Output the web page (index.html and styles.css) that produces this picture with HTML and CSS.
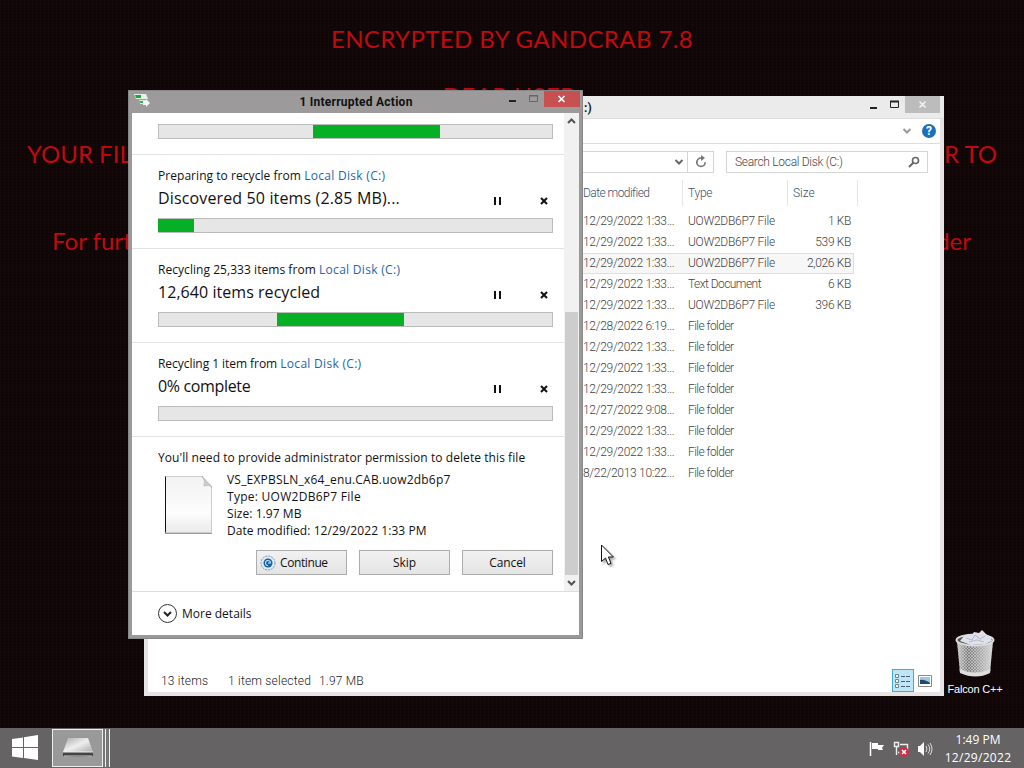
FILE: index.html
```html
<!DOCTYPE html>
<html lang="en">
<head>
    <meta charset="UTF-8">
    <meta name="viewport" content="width=device-width, initial-scale=1.0">
    <title>Desktop</title>
    <link rel="stylesheet" href="styles.css">
</head>
<body>
<div class="desktop">

    <!-- Wallpaper text -->
    <div class="wallpaper">
        <div class="note note-title">ENCRYPTED BY GANDCRAB 7.8</div>
        <div class="note note-dear">DEAR USER,</div>
        <div class="note note-split note-files"><span>YOUR FILES</span><span>ORDER TO</span></div>
        <div class="note note-split note-steps"><span>For further</span><span>folder</span></div>
    </div>

    <!-- Recycle bin -->
    <div class="desktop-icon">
        <svg width="42" height="50" viewBox="0 0 42 50">
            <defs>
                <linearGradient id="bin" x1="0" x2="1" y1="0" y2="0">
                    <stop offset="0" stop-color="#c8c8c8"/>
                    <stop offset=".3" stop-color="#7a7a7a"/>
                    <stop offset=".65" stop-color="#a5a5a5"/>
                    <stop offset="1" stop-color="#d8d8d8"/>
                </linearGradient>
                <pattern id="mesh" width="3" height="3" patternUnits="userSpaceOnUse">
                    <path d="M0 0l3 3M3 0l-3 3" stroke="#ddd" stroke-width=".5"/>
                </pattern>
            </defs>
            <path d="M3 12l3 31q14 7 30 0l3-31z" fill="url(#bin)"/>
            <path d="M3 12l3 31q14 7 30 0l3-31z" fill="url(#mesh)"/>
            <path d="M5.500 40q15 7 31 0l-.5 4q-14 7-30 0z" fill="#dedede"/>
            <ellipse cx="21" cy="11" rx="18.500" ry="5.500" fill="#555" stroke="#ddd" stroke-width="2"/>
            <path d="M6 12l4-5 8-1 2-3 5 1 3-3 4 4 5 3 1 4-7 3-14 1z" fill="#dfe2ea"/>
            <path d="M12 9l6 2 3-5 5 4 5-3M15 13l8-2 7 2" fill="none" stroke="#b4b9c6"/>
        </svg>
        <span>Falcon C++</span>
    </div>

    <!-- File explorer -->
    <div class="explorer">
        <div class="explorer-title">
            <span class="explorer-name">:)</span>
            <svg class="explorer-controls" width="74" height="18" viewBox="0 0 74 18">
                <path d="M4 12h7" stroke="#222" stroke-width="2"/>
                <path d="M24.500 5.500h8v6h-8z" fill="none" stroke="#222"/>
                <path d="M24 5.500h9" stroke="#222" stroke-width="2"/>
                <rect x="39" y="0" width="35" height="17" fill="#bcbcbc"/>
                <path d="M53.500 5.500l6 6M59.500 5.500l-6 6" stroke="#f2f2f2" stroke-width="1.700"/>
            </svg>
        </div>
        <div class="ribbon">
            <svg width="10" height="8" viewBox="0 0 10 8"><path d="M1.500 2l3.500 3.500L8.500 2" fill="none" stroke="#999" stroke-width="2"/></svg>
            <span class="help">?</span>
        </div>
        <div class="address-row">
            <div class="address">
                <svg width="10" height="8" viewBox="0 0 10 8"><path d="M1.500 2l3.500 3.500L8.500 2" fill="none" stroke="#666" stroke-width="2"/></svg>
            </div>
            <div class="refresh">
                <svg width="14" height="14" viewBox="0 0 14 14"><path d="M8.500 3H7a4.200 4.200 0 1 0 4.200 4.200" fill="none" stroke="#777" stroke-width="1.700"/><path d="M7 0l4 3-4 3z" fill="#777"/></svg>
            </div>
            <div class="search">
                <span>Search Local Disk (C:)</span>
                <svg width="12" height="12" viewBox="0 0 12 12"><circle cx="7.500" cy="4.500" r="3" fill="none" stroke="#666" stroke-width="1.600"/><path d="M5.300 6.700L1 11" stroke="#666" stroke-width="2"/></svg>
            </div>
        </div>
        <div class="columns">
            <span class="date">Date modified</span><span class="type">Type</span><span class="size">Size</span>
        </div>
        <div class="files">
            <div class="file"><span class="date">12/29/2022 1:33...</span><span class="type">UOW2DB6P7 File</span><span class="size">1 KB</span></div>
            <div class="file"><span class="date">12/29/2022 1:33...</span><span class="type">UOW2DB6P7 File</span><span class="size">539 KB</span></div>
            <div class="file selected"><span class="date">12/29/2022 1:33...</span><span class="type">UOW2DB6P7 File</span><span class="size">2,026 KB</span></div>
            <div class="file"><span class="date">12/29/2022 1:33...</span><span class="type text-type">Text Document</span><span class="size">6 KB</span></div>
            <div class="file"><span class="date">12/29/2022 1:33...</span><span class="type">UOW2DB6P7 File</span><span class="size">396 KB</span></div>
            <div class="file"><span class="date">12/28/2022 6:19...</span><span class="type folder">File folder</span></div>
            <div class="file"><span class="date">12/29/2022 1:33...</span><span class="type folder">File folder</span></div>
            <div class="file"><span class="date">12/29/2022 1:33...</span><span class="type folder">File folder</span></div>
            <div class="file"><span class="date">12/29/2022 1:33...</span><span class="type folder">File folder</span></div>
            <div class="file"><span class="date">12/27/2022 9:08...</span><span class="type folder">File folder</span></div>
            <div class="file"><span class="date">12/29/2022 1:33...</span><span class="type folder">File folder</span></div>
            <div class="file"><span class="date">12/29/2022 1:33...</span><span class="type folder">File folder</span></div>
            <div class="file"><span class="date">8/22/2013 10:22...</span><span class="type folder">File folder</span></div>
        </div>
        <div class="status">
            <span class="count">13 items</span>
            <span class="chosen">1 item selected</span>
            <span class="bytes">1.97 MB</span>
            <div class="views">
                <div class="view active">
                    <svg width="16" height="14" viewBox="0 0 16 14"><path d="M.5.500h3v3h-3zM.5 5.500h3v3h-3zM.5 10.500h3v3h-3z" fill="#fff" stroke="#6a8496"/><path d="M6 2.500h10M6 7.500h10M6 12.500h10" stroke="#46606f" stroke-dasharray="4 1"/></svg>
                </div>
                <div class="view">
                    <svg width="14" height="12" viewBox="0 0 14 12"><path d="M.5.500h13v11H.5z" fill="#fff" stroke="#888"/><path d="M2 2h10v7H2z" fill="#9cc8e2"/><path d="M2 5q4-1 10 3v1H2z" fill="#204a68"/></svg>
                </div>
            </div>
        </div>
    </div>

    <!-- Delete progress dialog -->
    <div class="dialog">
        <div class="dialog-title">
            <svg class="dialog-icon" width="16" height="15" viewBox="0 0 16 15">
                <path d="M0 1h12l2 5H2z" fill="#e8efe9"/><path d="M1 2h6v3H2z" fill="#16a938"/><path d="M5 7h8v4H6z" fill="#dce9df"/><path d="M5 8h4v2H6z" fill="#35b853"/><path d="M9 8h3V6l4 4-4 4v-2H9z" fill="#f4f4f4"/>
            </svg>
            <span class="dialog-name">1 Interrupted Action</span>
            <svg class="dialog-controls" width="74" height="17" viewBox="0 0 74 17">
                <path d="M3 11h7" stroke="#222" stroke-width="2"/>
                <path d="M23.500 5.500h8v6h-8zM23 6h9" fill="none" stroke="#666"/>
                <rect x="38" y="0" width="36" height="17" fill="#c75050"/>
                <path d="M52.500 6l6 6M58.500 6l-6 6" stroke="#fff" stroke-width="1.700"/>
            </svg>
        </div>
        <div class="dialog-scroll">
            <div class="jobs">
                <div class="job first">
                    <div class="bar"><div class="fill" style="margin-left: 154px; width: 127px"></div></div>
                </div>
                <div class="job">
                    <div class="job-from">Preparing to recycle from <a>Local Disk (C:)</a></div>
                    <div class="job-line">
                        <span class="job-state discovered">Discovered 50 items (2.85 MB)...</span>
                        <svg width="55" height="10" viewBox="0 0 55 10"><path d="M1 1v8M6 1v8" stroke="#111" stroke-width="2"/><path d="M47 2l6 6M53 2l-6 6" stroke="#111" stroke-width="2"/></svg>
                    </div>
                    <div class="bar"><div class="fill edge" style="width: 36px"></div></div>
                </div>
                <div class="job">
                    <div class="job-from">Recycling 25,333 items from <a>Local Disk (C:)</a></div>
                    <div class="job-line">
                        <span class="job-state">12,640 items recycled</span>
                        <svg width="55" height="10" viewBox="0 0 55 10"><path d="M1 1v8M6 1v8" stroke="#111" stroke-width="2"/><path d="M47 2l6 6M53 2l-6 6" stroke="#111" stroke-width="2"/></svg>
                    </div>
                    <div class="bar"><div class="fill" style="margin-left: 118px; width: 127px"></div></div>
                </div>
                <div class="job">
                    <div class="job-from single">Recycling 1 item from <a>Local Disk (C:)</a></div>
                    <div class="job-line">
                        <span class="job-state complete">0% complete</span>
                        <svg width="55" height="10" viewBox="0 0 55 10"><path d="M1 1v8M6 1v8" stroke="#111" stroke-width="2"/><path d="M47 2l6 6M53 2l-6 6" stroke="#111" stroke-width="2"/></svg>
                    </div>
                    <div class="bar"></div>
                </div>
                <div class="permission">
                    <div class="permission-text">You'll need to provide administrator permission to delete this file</div>
                    <div class="file-info">
                        <svg width="50" height="60" viewBox="0 0 50 60">
                            <defs><linearGradient id="paper" x1="0" x2="0" y1="0" y2="1"><stop offset="0" stop-color="#f2f2f2"/><stop offset=".65" stop-color="#fdfdfd"/><stop offset="1" stop-color="#eaeaea"/></linearGradient></defs>
                            <path d="M1.500 1.500h36l10 10v46h-46z" fill="url(#paper)" stroke="#ccc"/>
                            <path d="M1.500 1.500v56" stroke="#111"/><path d="M1 58.500h47" stroke="#999"/>
                            <path d="M38 1q4 5 2 10 5-2 8 1z" fill="#ccc" stroke="#aaa" stroke-width=".6"/>
                        </svg>
                        <div class="file-lines">
                            <div class="line-name">VS_EXPBSLN_x64_enu.CAB.uow2db6p7</div>
                            <div class="line-type">Type: UOW2DB6P7 File</div>
                            <div class="line-size">Size: 1.97 MB</div>
                            <div class="line-date">Date modified: 12/29/2022 1:33 PM</div>
                        </div>
                    </div>
                    <div class="buttons">
                        <button class="btn continue">
                            <svg width="16" height="16" viewBox="0 0 16 16"><circle cx="8" cy="8" r="7" fill="#dceaf5" stroke="#8297a8" stroke-dasharray="2 1"/><circle cx="8" cy="8" r="4.500" fill="#17639f"/><path d="M8 10.500a2.500 2.500 0 1 1 2.500-2.500H8" fill="none" stroke="#bfe0f5" stroke-width="1.100"/></svg>
                            Continue
                        </button>
                        <button class="btn">Skip</button>
                        <button class="btn">Cancel</button>
                    </div>
                </div>
            </div>
            <div class="scrollbar">
                <svg width="9" height="8" viewBox="0 0 9 8"><path d="M1 6l3.500-3.500L8 6" fill="none" stroke="#555" stroke-width="2"/></svg>
                <div class="thumb"></div>
                <svg width="9" height="8" viewBox="0 0 9 8"><path d="M1 2l3.500 3.500L8 2" fill="none" stroke="#555" stroke-width="2"/></svg>
            </div>
        </div>
        <div class="more">
            <svg width="20" height="20" viewBox="0 0 20 20"><circle cx="9.500" cy="9.500" r="9" fill="#fff" stroke="#333"/><path d="M6 8l3.500 3.500L13 8" fill="none" stroke="#222" stroke-width="2"/></svg>
            <span>More details</span>
        </div>
    </div>

    <!-- Mouse pointer -->
    <svg class="pointer" width="16" height="24" viewBox="0 0 16 24">
        <path d="M1.500 1v16.500l4-3.500 2.500 6.500 3-1.200-2.600-6.300h5z" fill="#fff" stroke="#111"/>
    </svg>

    <!-- Taskbar -->
    <div class="taskbar">
        <svg class="start" width="27" height="26" viewBox="0 0 27 26"><path d="M0 4l11-1.500V12H0zM12 2.300L26 0v12H12zM0 13h11v10L0 21.500zM12 13h14v12l-14-2z" fill="#fff"/></svg>
        <div class="task">
            <svg width="32" height="20" viewBox="0 0 32 20">
                <defs><linearGradient id="drive" x1="0" x2="1" y1="0" y2="1"><stop offset="0" stop-color="#aaa"/><stop offset=".5" stop-color="#eee"/><stop offset="1" stop-color="#aaa"/></linearGradient></defs>
                <path d="M6 0h20l5 14H1z" fill="url(#drive)"/><path d="M1 14h30v4q-15 2-30 0z" fill="#444"/><path d="M1 14h30" stroke="#eee"/><path d="M2 18h28" stroke="#ccc"/>
            </svg>
        </div>
        <div class="stack"></div>
        <div class="stack"></div>
        <div class="tray">
            <svg width="16" height="16" viewBox="0 0 16 16"><path d="M1.500 1v14" stroke="#fff" stroke-width="1.500"/><path d="M3 2h6v2h6l-2 3 1 2H9V8H3z" fill="#fff"/></svg>
            <svg width="17" height="16" viewBox="0 0 17 16"><path d="M1.500 1.500h4v4h-4zM3.500 6v8M7 3.500h7.500v6M5 11.500h4" fill="none" stroke="#eee" stroke-width="1.400"/><circle cx="11" cy="11" r="4.800" fill="#d52c42"/><path d="M9 9l4 4M13 9l-4 4" stroke="#fff" stroke-width="1.500"/></svg>
            <svg width="16" height="16" viewBox="0 0 16 16"><path d="M0 5h2l4-4v14l-4-4H0z" fill="#fff"/><path d="M8 5q2 3 0 6M10 3.500q3.500 4.500 0 9M12 2q4 6 0 12" fill="none" stroke="#ddd"/></svg>
        </div>
        <div class="clock"><span class="time">1:49 PM</span><span class="day">12/29/2022</span></div>
    </div>
</div>
</body>
</html>
```
FILE: styles.css
```css
/* General Styles */
* {
    box-sizing: border-box;
}

body {
    margin: 0;
    font-family: "Open Sans", sans-serif;
    font-size: 12px;
}

svg {
    display: block;
    flex-shrink: 0;
}

.desktop {
    position: relative;
    width: 1024px;
    height: 768px;
    overflow: hidden;
    background-color: #100708;
    background-image: repeating-linear-gradient(90deg, rgba(75, 20, 20, 0.1) 0 1px, transparent 1px 4px), repeating-linear-gradient(0deg, rgba(0, 0, 0, 0.2) 0 1px, transparent 1px 3px);
}

/* Wallpaper */
.note {
    color: #bf0a10;
    font-family: Lato, sans-serif;
    font-size: 24px;
    line-height: 30px;
    white-space: nowrap;
    text-align: center;
}

.note-title {
    padding-top: 24px;
    letter-spacing: 0.4px;
}

.note-dear {
    padding-top: 27px;
    letter-spacing: 0.4px;
}

.note-split {
    display: flex;
    justify-content: space-between;
}

.note-files {
    padding: 28px 27px 0;
}

.note-steps {
    padding: 57px 53px 0 52px;
}

.desktop-icon {
    position: absolute;
    left: 936px;
    top: 629px;
    width: 78px;
    display: flex;
    flex-direction: column;
    align-items: center;
    color: #fff;
    font-family: "Liberation Sans", sans-serif;
    font-size: 11px;
    line-height: 20px;
    letter-spacing: -0.2px;
}

/* Explorer */
.explorer {
    position: absolute;
    left: 144px;
    top: 96px;
    width: 800px;
    height: 600px;
    display: flex;
    flex-direction: column;
    background: #fff;
    border: 1px solid #e8e4e4;
    border-width: 0 4px 4px;
    color: #444;
    font-family: Roboto, sans-serif;
    font-weight: 300;
}

.explorer-title {
    display: flex;
    justify-content: space-between;
    height: 23px;
    margin: 0 -4px;
    padding-right: 4px;
    background: #ebebeb;
    border-bottom: 1px solid #ddd;
}

.explorer-name {
    padding-left: 440px;
    color: #222;
    font-weight: bold;
    line-height: 24px;
}

.ribbon {
    display: flex;
    align-items: center;
    justify-content: flex-end;
    gap: 10px;
    height: 25px;
    padding-right: 4px;
    border-bottom: 1px solid #ddd;
}

.help {
    width: 14px;
    height: 14px;
    border-radius: 50%;
    background: #1b6fbd;
    color: #fff;
    font-weight: bold;
    line-height: 14px;
    text-align: center;
}

.address-row {
    display: flex;
    height: 36px;
    padding: 7px 12px 7px 30px;
}

.address,
.refresh,
.search {
    display: flex;
    align-items: center;
    border: 1px solid #d4d4d4;
}

.address {
    flex: 1;
    justify-content: flex-end;
    padding-right: 3px;
}

.refresh {
    width: 26px;
    justify-content: center;
    border-left: 0;
}

.search {
    width: 202px;
    margin-left: 12px;
    padding: 0 7px 0 8px;
    justify-content: space-between;
    letter-spacing: -0.3px;
}

.columns,
.file {
    display: flex;
    margin-left: 432px;
}

.columns {
    height: 26px;
    margin-bottom: 5px;
    line-height: 26px;
    color: #3c506a;
}

.date {
    width: 105px;
    padding-left: 3px;
    letter-spacing: -0.3px;
}

.columns .date {
    letter-spacing: -0.55px;
}

.type {
    width: 105px;
    padding-left: 3px;
    letter-spacing: -0.27px;
}

.type.text-type,
.type.folder {
    letter-spacing: -0.55px;
}

.columns .type {
    border-left: 1px solid #e5e5e5;
    border-right: 1px solid #e5e5e5;
    padding-left: 5px;
    margin-left: -3px;
    width: 106px;
}

.columns .size {
    width: 70px;
    padding-left: 5px;
    border-right: 1px solid #e5e5e5;
}

.file {
    width: 274px;
    height: 21px;
    line-height: 21px;
    white-space: nowrap;
}

.file .size {
    width: 61px;
    text-align: right;
    letter-spacing: -0.35px;
}

.file.selected {
    background: #f7f7f7;
    box-shadow: inset 0 0 0 1px #dedede;
}

.status {
    display: flex;
    align-items: center;
    height: 23px;
    margin-top: auto;
    padding: 0 4px 0 13px;
    color: #222;
    letter-spacing: 0.2px;
}

.count {
    width: 67px;
}

.chosen {
    width: 91px;
}

.views {
    display: flex;
    margin-left: auto;
}

.view {
    display: flex;
    align-items: center;
    justify-content: center;
    width: 22px;
    height: 23px;
}

.view.active {
    background: #bfe6f8;
    border: 1px solid #4aa8d0;
}

/* Dialog */
.dialog {
    position: absolute;
    left: 128px;
    top: 90px;
    width: 455px;
    height: 549px;
    display: flex;
    flex-direction: column;
    background: #fff;
    border: 4px solid #999;
    border-top: 0;
    outline: 1px solid #888;
    outline-offset: -1px;
    color: #111;
}

.dialog-title {
    display: flex;
    height: 23px;
    margin: 0 -4px;
    padding: 0 3px 0 6px;
    background: #9c9a9a;
}

.dialog-icon {
    margin-top: 3px;
}

.dialog-name {
    flex: 1;
    padding-left: 56px;
    text-align: center;
    font-family: Roboto, sans-serif;
    font-weight: bold;
    line-height: 24px;
    letter-spacing: 0.25px;
}

.dialog-scroll {
    display: flex;
    height: 479px;
    border-bottom: 1px solid #ddd;
}

.jobs {
    width: 432px;
}

.job {
    height: 94px;
    padding: 12px 11px 0 26px;
    border-bottom: 1px solid #e2e2e2;
}

.job.first {
    height: 42px;
    padding-top: 11px;
}

.job-from {
    height: 18px;
    line-height: 18px;
    white-space: nowrap;
    letter-spacing: 0.05px;
}

.job-from.single {
    letter-spacing: -0.05px;
}

.job-from a {
    color: #1c66ac;
    letter-spacing: 0.3px;
}

.job-line {
    display: flex;
    justify-content: space-between;
    height: 33px;
    padding-right: 4px;
}

.job-line svg {
    margin-top: 11px;
}

.job-state {
    font-size: 16px;
    line-height: 26px;
    letter-spacing: 0.05px;
}

.job-state.discovered {
    letter-spacing: 0.14px;
}

.job-state.complete {
    letter-spacing: -0.35px;
}

.bar {
    height: 15px;
    border: 1px solid #bcbcbc;
    background: #e6e6e6;
}

.fill {
    height: 13px;
    background: #06b025;
}

.fill.edge {
    margin-left: -1px;
}

.permission {
    padding: 12px 11px 0 26px;
}

.permission-text {
    line-height: 18px;
    white-space: nowrap;
    letter-spacing: 0.07px;
}

.file-info {
    display: flex;
    gap: 13px;
    padding: 4px 0 0 6px;
}

.file-info svg {
    margin-top: 4px;
}

.file-lines {
    line-height: 17px;
    letter-spacing: 0.07px;
}

.line-name {
    letter-spacing: 0.2px;
}

.line-type {
    letter-spacing: 0.27px;
}

.buttons {
    display: flex;
    justify-content: flex-end;
    gap: 12px;
    padding-top: 11px;
}

.btn {
    display: flex;
    align-items: center;
    justify-content: center;
    gap: 4px;
    width: 91px;
    height: 25px;
    padding: 0;
    border: 1px solid #acacac;
    background: linear-gradient(#f1f1f1, #e4e4e4);
    color: #111;
    font: inherit;
    letter-spacing: -0.1px;
}

.btn.continue {
    justify-content: flex-start;
    padding-left: 3px;
    letter-spacing: -0.4px;
}

.scrollbar {
    display: flex;
    flex-direction: column;
    align-items: center;
    width: 15px;
    padding: 4px 0 4px;
    background: #f1f1f1;
}

.thumb {
    width: 13px;
    height: 263px;
    margin-top: auto;
    margin-bottom: 4px;
    background: #cdcdcd;
}

.more {
    display: flex;
    align-items: center;
    gap: 4px;
    flex: 1;
    padding-left: 26px;
}

.pointer {
    position: absolute;
    left: 600px;
    top: 544px;
    filter: drop-shadow(2px 2px 1px rgba(0, 0, 0, 0.35));
}

/* Taskbar */
.taskbar {
    position: absolute;
    left: 0;
    right: 0;
    bottom: 0;
    height: 40px;
    display: flex;
    background: #656363;
    color: #fff;
}

.start {
    margin: 7px 13px 0 12px;
}

.task {
    display: flex;
    align-items: center;
    justify-content: center;
    width: 51px;
    height: 38px;
    margin-top: 1px;
    border: 1px solid #eee;
    background: #9a9999;
}

.stack {
    width: 3px;
    height: 38px;
    margin-top: 1px;
    border-right: 1px solid #eee;
    background: #777;
}

.stack + .stack {
    width: 4px;
}

.tray {
    display: flex;
    align-items: center;
    gap: 8px;
    margin-left: auto;
    padding-top: 2px;
}

.clock {
    display: flex;
    flex-direction: column;
    align-items: center;
    width: 68px;
    margin: 3px 12px 0 10px;
    line-height: 18px;
}

.day {
    letter-spacing: 0.3px;
}
```
